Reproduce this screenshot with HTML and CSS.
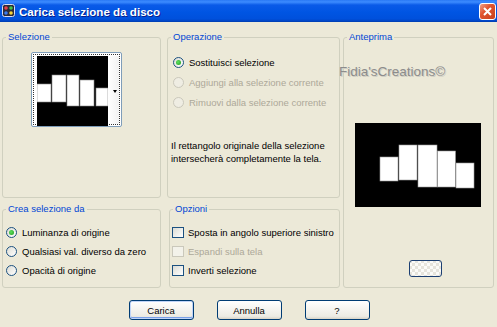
FILE: index.html
```html
<!DOCTYPE html>
<html lang="it">
<head>
    <meta charset="UTF-8">
    <link rel="stylesheet" href="styles.css">
    <title>Carica selezione da disco</title>
</head>
<body>
<div class="dialog">
    <div class="titlebar">
        <svg class="app-icon" width="13" height="13" viewBox="0 0 13 13">
            <rect x="0.5" y="0.5" width="12" height="12" rx="2" fill="#2b2b3a" stroke="#d8dcef"/>
            <circle cx="4" cy="4" r="1.8" fill="#e8404a"/>
            <circle cx="9" cy="4" r="1.8" fill="#3fc24a"/>
            <circle cx="4" cy="9" r="1.8" fill="#3c7cf0"/>
            <circle cx="9" cy="9" r="1.8" fill="#f2d23a"/>
        </svg>
        <span class="title">Carica selezione da disco</span>
        <div class="close-btn">
            <svg width="9" height="9" viewBox="0 0 9 9"><path d="M1 1l7 7M8 1l-7 7" stroke="white" stroke-width="2"/></svg>
        </div>
    </div>

    <div class="content">
        <div class="left-grid">
            <fieldset class="group">
                <legend>Selezione</legend>
                <div class="thumb-box">
                    <div class="thumb-focus">
                        <svg class="thumb-img" width="71" height="70" viewBox="0 0 71 70">
                            <rect width="71" height="70" fill="#000"/>
                            <rect x="0" y="28" width="14" height="18" fill="#fff" stroke="#888" stroke-width="0.6"/>
                            <rect x="15" y="19" width="14" height="27" fill="#fff" stroke="#888" stroke-width="0.6"/>
                            <rect x="30" y="19" width="12" height="31" fill="#fff" stroke="#888" stroke-width="0.6"/>
                            <rect x="43" y="24" width="14" height="26" fill="#fff" stroke="#888" stroke-width="0.6"/>
                            <rect x="59" y="32" width="12" height="18" fill="#fff" stroke="#888" stroke-width="0.6"/>
                        </svg>
                        <div class="thumb-drop"><span class="drop-arrow"></span></div>
                    </div>
                </div>
            </fieldset>

            <fieldset class="group">
                <legend>Operazione</legend>
                <div class="option-list op-list">
                    <div class="option"><span class="radio on"></span>Sostituisci selezione</div>
                    <div class="option disabled"><span class="radio"></span>Aggiungi alla selezione corrente</div>
                    <div class="option disabled"><span class="radio"></span>Rimuovi dalla selezione corrente</div>
                </div>
                <p class="note">Il rettangolo originale della selezione intersecherà completamente la tela.</p>
            </fieldset>

            <fieldset class="group">
                <legend>Crea selezione da</legend>
                <div class="option-list crea-list">
                    <div class="option"><span class="radio on"></span>Luminanza di origine</div>
                    <div class="option"><span class="radio"></span>Qualsiasi val. diverso da zero</div>
                    <div class="option"><span class="radio"></span>Opacità di origine</div>
                </div>
            </fieldset>

            <fieldset class="group opzioni">
                <legend>Opzioni</legend>
                <div class="option-list opt-list">
                    <div class="option"><span class="check"></span>Sposta in angolo superiore sinistro</div>
                    <div class="option disabled"><span class="check"></span>Espandi sulla tela</div>
                    <div class="option"><span class="check"></span>Inverti selezione</div>
                </div>
            </fieldset>
        </div>

        <fieldset class="group preview-group">
            <legend>Anteprima</legend>
            <svg class="preview" width="126" height="84" viewBox="0 0 126 84">
                <rect width="126" height="84" fill="#000"/>
                <rect x="25" y="34" width="18" height="24" fill="#fff" stroke="#999" stroke-width="0.6"/>
                <rect x="44" y="22" width="18" height="35" fill="#fff" stroke="#999" stroke-width="0.6"/>
                <rect x="63" y="22" width="19" height="42" fill="#fff" stroke="#999" stroke-width="0.6"/>
                <rect x="82.5" y="28" width="18" height="36" fill="#fff" stroke="#999" stroke-width="0.6"/>
                <rect x="101" y="40" width="18" height="25" fill="#fff" stroke="#999" stroke-width="0.6"/>
            </svg>
            <div class="zoom-btn"></div>
        </fieldset>
    </div>

    <div class="buttons">
        <div class="btn default">Carica</div>
        <div class="btn">Annulla</div>
        <div class="btn">?</div>
    </div>

    <div class="watermark">Fidia'sCreations©</div>
</div>
</body>
</html>
```

FILE: styles.css
```css
html, body {
    margin: 0;
    padding: 0;
}
body {
    width: 497px;
    height: 327px;
    overflow: hidden;
    background: #ece9d8;
    font-family: "Liberation Sans", Arial, sans-serif;
    font-size: 9.5px;
    color: #000;
}
.dialog {
    position: relative;
    height: 327px;
}
.titlebar {
    display: flex;
    align-items: center;
    height: 22px;
    background: linear-gradient(#2a79f5 0, #3d8cff 2px, #0a5ae8 5px, #0055e3 55%, #0050dc 85%, #0045c4 96%, #003aa8 100%);
}
.app-icon {
    margin-left: 2px;
    margin-top: -1px;
}
.title {
    margin-left: 4px;
    font-size: 11.6px;
    font-weight: bold;
    color: #fff;
    text-shadow: 1px 1px 0 #0a1f8c;
    flex: 1;
}
.close-btn {
    display: flex;
    align-items: center;
    justify-content: center;
    width: 15px;
    height: 15px;
    margin-right: 1px;
    border: 1px solid #fff;
    border-radius: 3px;
    background: linear-gradient(135deg, #f0a08a 0, #e0542f 40%, #c8401c 100%);
}
.content {
    display: flex;
    gap: 3px;
    padding: 9px 0 0 2px;
}
.left-grid {
    display: grid;
    grid-template-columns: 159px 173px;
    grid-template-rows: 167px 85px;
    column-gap: 6px;
    row-gap: 5px;
}
.group {
    margin: 0;
    padding: 0;
    min-width: 0;
    border: 1px solid #d0d0bf;
    border-radius: 3px;
    box-sizing: border-box;
}
.group legend {
    margin-left: 3px;
    padding: 0 2px;
    line-height: 12px;
    color: #0046d5;
}
.opzioni {
    margin-left: 2px;
}
.preview-group {
    width: 151px;
    height: 257px;
}

/* thumbnail selector */
.thumb-box {
    width: 91px;
    height: 75px;
    margin: 9px 0 0 28px;
    box-sizing: border-box;
    border: 1px solid #7f9db9;
    border-radius: 2px;
    background: #fff;
    padding: 1px;
}
.thumb-focus {
    display: flex;
    height: 100%;
    box-sizing: border-box;
    border: 1px dotted #333;
    padding: 1px 0 0 3px;
}
.thumb-img {
    display: block;
}
.thumb-drop {
    flex: 1;
    display: flex;
    align-items: center;
    justify-content: flex-end;
    padding-right: 2px;
    background: linear-gradient(90deg, #fff, #f2f2f2);
}
.drop-arrow {
    width: 0;
    height: 0;
    border-left: 2px solid transparent;
    border-right: 2px solid transparent;
    border-top: 3px solid #000;
    margin-top: 2px;
}

/* radio / checkbox lists */
.option-list {
    display: flex;
    flex-direction: column;
}
.option {
    display: flex;
    align-items: center;
    gap: 5px;
    white-space: nowrap;
}
.option.disabled {
    color: #aca899;
}
.op-list {
    margin: 9px 0 0 5px;
}
.op-list .option {
    height: 20px;
}
.crea-list {
    margin: 8px 0 0 3px;
}
.crea-list .option, .opt-list .option {
    height: 19px;
}
.opt-list {
    margin: 8px 0 0 2px;
}
.opt-list .option {
    gap: 4px;
}
.radio {
    position: relative;
    flex: none;
    width: 11px;
    height: 11px;
    box-sizing: border-box;
    border: 1px solid #1c5180;
    border-radius: 50%;
    background: linear-gradient(135deg, #dcdcd4, #fff);
}
.radio.on::after {
    content: "";
    position: absolute;
    left: 2px;
    top: 2px;
    width: 5px;
    height: 5px;
    border-radius: 50%;
    background: radial-gradient(circle at 40% 40%, #5ee05e, #1e9a1e);
}
.disabled .radio {
    border-color: #cac8bb;
    background: #efede3;
}
.check {
    flex: none;
    width: 12px;
    height: 11px;
    box-sizing: border-box;
    border: 1px solid #1c5180;
    background: linear-gradient(135deg, #dcdcd4, #fff);
}
.disabled .check {
    border-color: #cac8bb;
    background: #f3f2ea;
}
.note {
    margin: 27px 0 0 3px;
    width: 162px;
    line-height: 13px;
}

/* preview */
.preview {
    display: block;
    margin: 80px 0 0 11px;
}
.zoom-btn {
    width: 33px;
    height: 17px;
    margin: 53px 0 0 65px;
    box-sizing: border-box;
    border: 1px solid #1c3f72;
    border-radius: 3px;
    background:
        repeating-conic-gradient(#e6e4dc 0 25%, #fbfbf8 0 50%) 8px 5px / 6px 6px,
        #f4f3ee;
}

/* buttons */
.buttons {
    display: flex;
    justify-content: center;
    gap: 23px;
    margin-top: 12px;
    padding-left: 1px;
}
.btn {
    display: flex;
    align-items: center;
    justify-content: center;
    width: 65px;
    height: 20px;
    box-sizing: border-box;
    border: 1px solid #003c74;
    border-radius: 3px;
    background: linear-gradient(#ffffff 0, #f4f3ee 50%, #ecebe4 85%, #d8d3c6 100%);
}
.btn.default {
    box-shadow: inset 0 0 0 1px #c0d4f7, inset 0 -1px 0 1px #7aa0e8;
}

.watermark {
    position: absolute;
    left: 339px;
    top: 64px;
    font-size: 13.5px;
    color: #8c8c8c;
    text-shadow: 1px 1px 0 #cfcdc2;
    white-space: nowrap;
}
```
